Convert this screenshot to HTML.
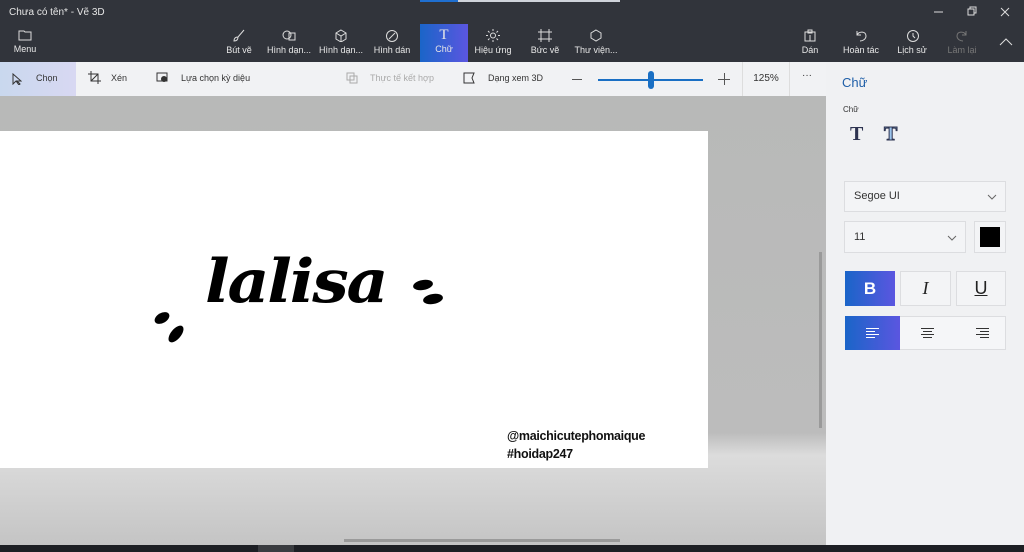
<!DOCTYPE html>
<html><head><meta charset="utf-8"><style>
*{margin:0;padding:0;box-sizing:border-box}
body{width:1024px;height:552px;overflow:hidden;position:relative;font-family:"Liberation Sans",sans-serif;background:#bdbdbd}
.top{position:absolute;left:0;top:0;width:1024px;height:62px;background:#31343b;color:#e6e6e6}
.abs{position:absolute}
.tb{position:absolute;top:24px;height:38px;width:50px;text-align:center;font-size:9px;color:#e8e8e8}
.tb svg{display:block;margin:5px auto 3px}
.bar{position:absolute;left:0;top:62px;width:826px;height:34px;background:#f1f2f4;font-size:9px;color:#333}
.panel{position:absolute;left:826px;top:62px;width:198px;height:483px;background:#f0f1f3}
.box{position:absolute;background:#f3f4f6;border:1px solid #dcdde0}
</style></head><body>
<div class="top">
<div class="abs" style="left:420px;top:0;width:38px;height:2px;background:#1f6fd0"></div>
<div class="abs" style="left:458px;top:0;width:162px;height:2px;background:#cfd3da"></div>
<div class="abs" style="left:9px;top:7px;font-size:10px">Chưa có tên* - Vẽ 3D</div>
<svg class="abs" style="left:930px;top:6px" width="80" height="12"><path d="M4 6h9" stroke="#ddd"/><path d="M38 3h6v6h-6z M40 3V1h6v6h-2" stroke="#ddd" fill="none"/><path d="M71 2l8 8M79 2l-8 8" stroke="#ddd"/></svg>
<div class="tb" style="left:0;width:50px"><svg width="14" height="12"><path d="M1 2h5l1 1h6v8H1z" fill="none" stroke="#ddd"/></svg>Menu</div>
<div class="tb" style="left:214px"><svg width="14" height="13"><path d="M12 1L6 8M2 12c0-3 2-4 4-4 0 3-2 4-4 4z" fill="none" stroke="#ddd"/></svg>Bút vẽ</div>
<div class="tb" style="left:264px"><svg width="14" height="13"><circle cx="5" cy="6" r="4" fill="none" stroke="#ddd"/><path d="M7 4h6v7H7z" fill="none" stroke="#ddd"/></svg>Hình dạn...</div>
<div class="tb" style="left:316px"><svg width="14" height="13"><path d="M7 1l5 3v6l-5 3-5-3V4zM2 4l5 3 5-3M7 7v6" fill="none" stroke="#ddd"/></svg>Hình dạn...</div>
<div class="tb" style="left:367px"><svg width="14" height="13"><circle cx="7" cy="7" r="5.5" fill="none" stroke="#ddd"/><path d="M4 10l6-6" stroke="#ddd"/></svg>Hình dán</div>
<div class="tb" style="left:420px;width:48px;background:linear-gradient(90deg,#1a65c8,#5b56e0)"><div style="font-family:'Liberation Serif';font-size:15px;margin-top:3px;height:17px">T</div>Chữ</div>
<div class="tb" style="left:468px"><svg width="14" height="13"><circle cx="7" cy="6.5" r="2.5" fill="none" stroke="#ddd"/><path d="M7 0v2M7 11v2M0 6.5h2M12 6.5h2M2 2l1.5 1.5M10.5 9.5L12 11M12 2l-1.5 1.5M3.5 9.5L2 11" stroke="#ddd"/></svg>Hiệu ứng</div>
<div class="tb" style="left:520px"><svg width="14" height="13"><path d="M3 0v13M11 0v13M0 3h14M0 10h14" stroke="#ddd"/></svg>Bức vẽ</div>
<div class="tb" style="left:570px;width:52px"><svg width="14" height="13"><path d="M7 1l5 3v5l-5 3-5-3V4z" fill="none" stroke="#ddd"/></svg>Thư viện...</div>
<div class="tb" style="left:785px"><svg width="12" height="13"><path d="M1 3h10v9H1zM4 1h4v3H4zM6 6v6" fill="none" stroke="#ddd"/></svg>Dán</div>
<div class="tb" style="left:835px;width:52px"><svg width="12" height="13"><path d="M2 2v4h4M2 6c2-4 9-4 9 1 0 3-3 5-6 5" fill="none" stroke="#ddd"/></svg>Hoàn tác</div>
<div class="tb" style="left:887px"><svg width="13" height="13"><circle cx="7" cy="7" r="5.5" fill="none" stroke="#ddd"/><path d="M7 4v3l2 2" fill="none" stroke="#ddd"/></svg>Lịch sử</div>
<div class="tb" style="left:937px;color:#777"><svg width="12" height="13"><path d="M10 2v4H6M10 6C8 2 1 2 1 7c0 3 3 5 6 5" fill="none" stroke="#777"/></svg>Làm lại</div>
<svg class="abs" style="left:999px;top:38px" width="14" height="8"><path d="M1 7l6-6 6 6" fill="none" stroke="#ddd"/></svg>
</div>
<div class="bar">
<div class="abs" style="left:0;top:0;width:76px;height:34px;background:linear-gradient(90deg,#c9d8ee,#d8d8f2)"></div>
<svg class="abs" style="left:12px;top:11px" width="10" height="12"><path d="M1 1v10l3-3 3 4 1-1-3-3h4z" fill="none" stroke="#333"/></svg>
<div class="abs" style="left:36px;top:11px">Chọn</div>
<svg class="abs" style="left:88px;top:9px" width="13" height="13"><path d="M3 0v10h10M0 3h10v10M3 10l7-7" fill="none" stroke="#333"/></svg>
<div class="abs" style="left:111px;top:11px">Xén</div>
<svg class="abs" style="left:156px;top:10px" width="14" height="12"><path d="M1 1h10v8H1z" fill="none" stroke="#333"/><circle cx="8" cy="7" r="3" fill="#333"/></svg>
<div class="abs" style="left:181px;top:11px">Lựa chọn kỳ diệu</div>
<svg class="abs" style="left:346px;top:10px" width="12" height="12"><path d="M1 1h7v7H1zM4 4h7v7H4z" fill="none" stroke="#aaa"/></svg>
<div class="abs" style="left:370px;top:11px;color:#aaa">Thực tế kết hợp</div>
<svg class="abs" style="left:463px;top:10px" width="12" height="12"><path d="M1 1h10l-2 5 2 5H1z" fill="none" stroke="#333"/></svg>
<div class="abs" style="left:488px;top:11px">Dạng xem 3D</div>
<div class="abs" style="left:572px;top:17px;width:10px;height:1px;background:#555"></div>
<div class="abs" style="left:598px;top:17px;width:105px;height:2px;background:#1a6fc4"></div>
<div class="abs" style="left:648px;top:9px;width:6px;height:18px;border-radius:3px;background:#1a6fc4"></div>
<div class="abs" style="left:718px;top:17px;width:12px;height:1px;background:#555"></div>
<div class="abs" style="left:724px;top:11px;width:1px;height:12px;background:#555"></div>
<div class="abs" style="left:742px;top:0;width:48px;height:34px;border-left:1px solid #ddd;border-right:1px solid #ddd;text-align:center;line-height:34px;font-size:10px">125%</div>
<div class="abs" style="left:802px;top:8px;font-size:10px">···</div>
</div>
<div class="abs" style="left:0;top:96px;width:826px;height:449px;background:linear-gradient(180deg,#b8b9b8 0%,#bcbcbc 75%,#dcdcdc 80%,#c4c4c4 100%)"></div>
<div class="abs" style="left:0;top:131px;width:708px;height:337px;background:#fff"></div>
<div class="abs" style="left:205px;top:247px;font-family:'DejaVu Serif',serif;font-style:italic;font-weight:bold;font-size:60px;letter-spacing:-2px;color:#000;transform:scaleX(1.08);transform-origin:left top">lalisa</div>
<svg class="abs" style="left:148px;top:275px" width="300" height="75"><ellipse cx="14" cy="43" rx="8" ry="5" transform="rotate(-30 14 43)"/><ellipse cx="28" cy="59" rx="10" ry="5" transform="rotate(-50 28 59)"/><ellipse cx="275" cy="10" rx="10" ry="5" transform="rotate(-10 275 10)"/><ellipse cx="285" cy="24" rx="10" ry="5" transform="rotate(-10 285 24)"/></svg>
<div class="abs" style="left:507px;top:427px;font-size:12.5px;font-weight:bold;line-height:18px;letter-spacing:-0.3px;color:#111">@maichicutephomaique<br>#hoidap247</div>
<div class="abs" style="left:819px;top:252px;width:3px;height:176px;background:#9a9a9a"></div>
<div class="abs" style="left:344px;top:539px;width:276px;height:3px;background:#9a9a9a"></div>
<div class="panel">
<div class="abs" style="left:16px;top:13px;font-size:13px;color:#1f5fa8">Chữ</div>
<div class="abs" style="left:17px;top:43px;font-size:8px;color:#333">Chữ</div>
<div class="abs" style="left:24px;top:61px;font-family:'Liberation Serif';font-weight:bold;font-size:20px;color:#2d3350">T</div>
<div class="abs" style="left:58px;top:61px;font-family:'Liberation Serif';font-weight:bold;font-size:20px;color:#9bc4ec;-webkit-text-stroke:1px #2d3350">T</div>
<div class="box" style="left:18px;top:119px;width:162px;height:31px;font-size:11px;color:#333;padding:8px 9px">Segoe UI<svg class="abs" style="right:8px;top:12px" width="10" height="6"><path d="M1 1l4 4 4-4" fill="none" stroke="#666"/></svg></div>
<div class="box" style="left:18px;top:159px;width:122px;height:32px;font-size:11px;color:#333;padding:9px 9px">11<svg class="abs" style="right:8px;top:13px" width="10" height="6"><path d="M1 1l4 4 4-4" fill="none" stroke="#666"/></svg></div>
<div class="box" style="left:148px;top:159px;width:32px;height:32px;padding:5px"><div style="width:20px;height:20px;background:#000"></div></div>
<div class="abs" style="left:19px;top:209px;width:50px;height:35px;background:linear-gradient(90deg,#1a65c8,#5b56e0);color:#fff;font-weight:bold;font-size:17px;text-align:center;line-height:35px">B</div>
<div class="box" style="left:74px;top:209px;width:51px;height:35px;font-family:'Liberation Serif';font-style:italic;font-size:18px;text-align:center;line-height:33px;color:#222">I</div>
<div class="box" style="left:130px;top:209px;width:50px;height:35px;font-size:18px;text-align:center;line-height:33px;color:#222;text-decoration:underline">U</div>
<div class="box" style="left:19px;top:254px;width:161px;height:34px;background:#f5f6f8"></div>
<div class="abs" style="left:19px;top:254px;width:55px;height:34px;background:linear-gradient(90deg,#1a65c8,#5b56e0)"></div>
<svg class="abs" style="left:40px;top:266px" width="14" height="10"><path d="M0 .5h13M0 3.5h9M0 6.5h13M0 9.5h9" stroke="#fff"/></svg>
<svg class="abs" style="left:95px;top:266px" width="14" height="10"><path d="M0 .5h13M2 3.5h9M0 6.5h13M2 9.5h9" stroke="#333"/></svg>
<svg class="abs" style="left:150px;top:266px" width="14" height="10"><path d="M0 .5h13M4 3.5h9M0 6.5h13M4 9.5h9" stroke="#333"/></svg>
</div>
<div class="abs" style="left:0;top:545px;width:1024px;height:7px;background:#1d1f24"></div>
<div class="abs" style="left:258px;top:545px;width:36px;height:7px;background:#3a3c40"></div>
</body></html>
